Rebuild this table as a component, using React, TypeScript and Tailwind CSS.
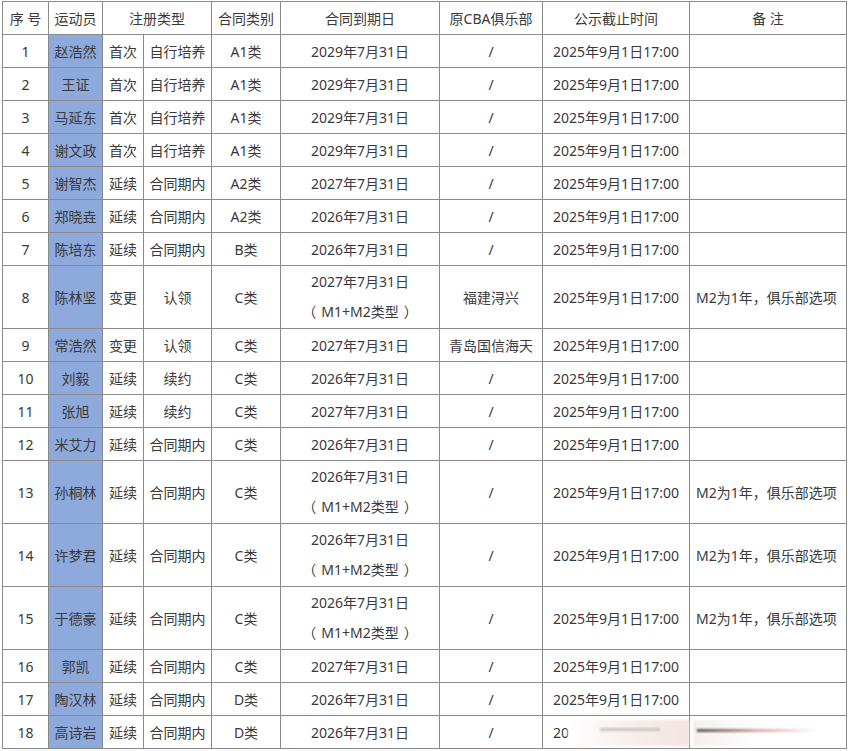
import React from 'react';

type Row = {
  no: number;
  name: string;
  reg: string;
  regType: string;
  cat: string;
  due: string;
  m2?: boolean;
  club: string;
  note?: string;
};

const ROWS: Row[] = [
  { no: 1, name: '赵浩然', reg: '首次', regType: '自行培养', cat: 'A1类', due: '2029年7月31日', club: '/' },
  { no: 2, name: '王证', reg: '首次', regType: '自行培养', cat: 'A1类', due: '2029年7月31日', club: '/' },
  { no: 3, name: '马延东', reg: '首次', regType: '自行培养', cat: 'A1类', due: '2029年7月31日', club: '/' },
  { no: 4, name: '谢文政', reg: '首次', regType: '自行培养', cat: 'A1类', due: '2029年7月31日', club: '/' },
  { no: 5, name: '谢智杰', reg: '延续', regType: '合同期内', cat: 'A2类', due: '2027年7月31日', club: '/' },
  { no: 6, name: '郑晓垚', reg: '延续', regType: '合同期内', cat: 'A2类', due: '2026年7月31日', club: '/' },
  { no: 7, name: '陈培东', reg: '延续', regType: '合同期内', cat: 'B类', due: '2026年7月31日', club: '/' },
  { no: 8, name: '陈林坚', reg: '变更', regType: '认领', cat: 'C类', due: '2027年7月31日', m2: true, club: '福建浔兴', note: 'M2为1年，俱乐部选项' },
  { no: 9, name: '常浩然', reg: '变更', regType: '认领', cat: 'C类', due: '2027年7月31日', club: '青岛国信海天' },
  { no: 10, name: '刘毅', reg: '延续', regType: '续约', cat: 'C类', due: '2026年7月31日', club: '/' },
  { no: 11, name: '张旭', reg: '延续', regType: '续约', cat: 'C类', due: '2027年7月31日', club: '/' },
  { no: 12, name: '米艾力', reg: '延续', regType: '合同期内', cat: 'C类', due: '2026年7月31日', club: '/' },
  { no: 13, name: '孙桐林', reg: '延续', regType: '合同期内', cat: 'C类', due: '2026年7月31日', m2: true, club: '/', note: 'M2为1年，俱乐部选项' },
  { no: 14, name: '许梦君', reg: '延续', regType: '合同期内', cat: 'C类', due: '2026年7月31日', m2: true, club: '/', note: 'M2为1年，俱乐部选项' },
  { no: 15, name: '于德豪', reg: '延续', regType: '合同期内', cat: 'C类', due: '2026年7月31日', m2: true, club: '/', note: 'M2为1年，俱乐部选项' },
  { no: 16, name: '郭凯', reg: '延续', regType: '合同期内', cat: 'C类', due: '2027年7月31日', club: '/' },
  { no: 17, name: '陶汉林', reg: '延续', regType: '合同期内', cat: 'D类', due: '2026年7月31日', club: '/' },
  { no: 18, name: '高诗岩', reg: '延续', regType: '合同期内', cat: 'D类', due: '2026年7月31日', club: '/' },
];

const cell = 'border border-[#8a8a8a] p-0 text-center align-middle';

const App: React.FC = () => {
  return (
    <div
      className="min-h-screen bg-white pl-[2px] pt-[1px] text-[14px] text-[#3a3a3a] relative"
      style={{ fontFamily: '"Noto Sans", "Noto Sans CJK SC", sans-serif' }}
    >
      <table className="border-collapse table-fixed w-[845px]">
        <colgroup>
          <col className="w-[46px]" />
          <col className="w-[54px]" />
          <col className="w-[41px]" />
          <col className="w-[68px]" />
          <col className="w-[69px]" />
          <col className="w-[159px]" />
          <col className="w-[103px]" />
          <col className="w-[147px]" />
          <col className="w-[157px]" />
        </colgroup>
        <thead>
          <tr className="h-[33px]">
            <th className={`${cell} font-normal`}>序 号</th>
            <th className={`${cell} font-normal`}>运动员</th>
            <th className={`${cell} font-normal`} colSpan={2}>注册类型</th>
            <th className={`${cell} font-normal`}>合同类别</th>
            <th className={`${cell} font-normal`}>合同到期日</th>
            <th className={`${cell} font-normal`}>原CBA俱乐部</th>
            <th className={`${cell} font-normal`}>公示截止时间</th>
            <th className={`${cell} font-normal`}>备 注</th>
          </tr>
        </thead>
        <tbody>
          {ROWS.map((r) => (
            <tr key={r.no} className={r.m2 ? 'h-[63px]' : 'h-[33px]'}>
              <td className={cell}>{r.no}</td>
              <td className={`${cell} bg-[#8ea9db]`}>{r.name}</td>
              <td className={cell}>{r.reg}</td>
              <td className={cell}>{r.regType}</td>
              <td className={cell}>{r.cat}</td>
              <td className={cell}>
                {r.m2 ? (
                  <div className="flex flex-col items-center leading-[30px]">
                    <span>{r.due}</span>
                    <span className="flex">
                      <span>（</span>
                      <span className="px-[5px]">M1+M2类型</span>
                      <span>）</span>
                    </span>
                  </div>
                ) : (
                  r.due
                )}
              </td>
              <td className={cell}>{r.club}</td>
              <td className={cell}>2025年9月1日17:00</td>
              <td className={`${cell} text-left pl-[6px]`}>{r.note ?? ''}</td>
            </tr>
          ))}
        </tbody>
      </table>
      {/* watermark smear over the last row */}
      <div className="absolute left-[568px] top-[720px] w-[121px] h-[26px] bg-gradient-to-r from-white via-[#f6efec] to-[#f3e4e2] blur-[1px]" />
      <div className="absolute left-[600px] top-[728px] w-[60px] h-[3px] bg-[#c9c4c4] blur-[1px]" />
      <div className="absolute left-[693px] top-[720px] w-[140px] h-[26px] bg-gradient-to-r from-[#f4efef] via-white to-white/30 blur-[1px]" />
      <div className="absolute left-[697px] top-[729px] w-[120px] h-[3px] bg-gradient-to-r from-[#555] via-[#d9a9a9] to-transparent blur-[1px]" />
    </div>
  );
};

export default App;
